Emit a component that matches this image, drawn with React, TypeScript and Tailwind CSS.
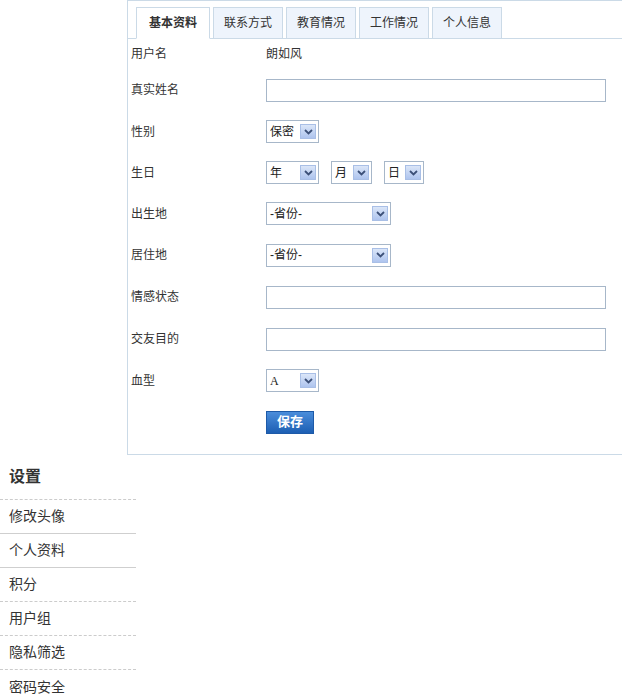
import React from 'react';

const FONT = '[font-family:"Liberation_Sans","Noto_Sans_CJK_SC",sans-serif]';

const TABS = ['基本资料', '联系方式', '教育情况', '工作情况', '个人信息'];

const MENU = [
  { label: '修改头像', line: 'solid' },
  { label: '个人资料', line: 'solid' },
  { label: '积分', line: 'dashed' },
  { label: '用户组', line: 'dashed' },
  { label: '隐私筛选', line: 'dashed' },
  { label: '密码安全', line: 'none' },
];

function Arrow() {
  return (
    <span className="flex h-[15px] w-[16px] items-center justify-center border border-[#a9bfe6] bg-gradient-to-b from-[#dbe6f8] to-[#aec4ee]">
      <svg width="9" height="6" viewBox="0 0 9 6">
        <path d="M1 1 L4.5 4.5 L8 1" fill="none" stroke="#3c5078" strokeWidth="1.8" />
      </svg>
    </span>
  );
}

function FakeSelect({ value, width, mono }: { value: string; width: string; mono?: boolean }) {
  return (
    <div className={`flex h-[23px] ${width} items-center justify-between border border-[#a7b7c9] bg-white pl-[3px] pr-[2px]`}>
      <span className={`text-[12px] leading-none text-[#222] ${mono ? '[font-family:"Liberation_Serif",serif]' : ''}`}>{value}</span>
      <Arrow />
    </div>
  );
}

function TextInput() {
  return <div className="h-[23px] w-[340px] border border-[#a7b7c9] bg-white" />;
}

function Row({ label, h, children }: { label: string; h: string; children?: React.ReactNode }) {
  return (
    <div className={`flex ${h} items-center`}>
      <div className="w-[135px] text-[12px] text-[#333]">{label}</div>
      <div className="flex items-center">{children}</div>
    </div>
  );
}

export default function App() {
  return (
    <div className={`w-[622px] bg-white ${FONT}`}>
      {/* Profile panel */}
      <div className="ml-[127px] w-[495px] border-b border-l border-t border-[#cbdae7]">
        {/* Tabs */}
        <div className="flex h-[38px] items-end gap-[3px] border-b border-[#cbdae7] pl-[8px]">
          {TABS.map((tab, i) => (
            <div
              key={tab}
              className={`-mb-px flex h-[32px] items-center justify-center border border-[#cbdae7] text-[12px] text-[#333] ${
                i === 0 ? 'w-[74px] border-b-white bg-white font-bold' : 'w-[70px] border-b-[#cbdae7] bg-[#eef4fc]'
              }`}
            >
              {tab}
            </div>
          ))}
        </div>

        {/* Form */}
        <div className="pb-[11px] pl-[3px]">
          <Row label="用户名" h="h-[30px]">
            <span className="text-[12px] text-[#333]">朗如风</span>
          </Row>
          <Row label="真实姓名" h="h-[42px]">
            <TextInput />
          </Row>
          <Row label="性别" h="h-[41px]">
            <FakeSelect value="保密" width="w-[53px]" />
          </Row>
          <Row label="生日" h="h-[41px]">
            <div className="flex gap-[12px]">
              <FakeSelect value="年" width="w-[53px]" />
              <FakeSelect value="月" width="w-[41px]" />
              <FakeSelect value="日" width="w-[40px]" />
            </div>
          </Row>
          <Row label="出生地" h="h-[41px]">
            <FakeSelect value="-省份-" width="w-[125px]" />
          </Row>
          <Row label="居住地" h="h-[42px]">
            <FakeSelect value="-省份-" width="w-[125px]" />
          </Row>
          <Row label="情感状态" h="h-[42px]">
            <TextInput />
          </Row>
          <Row label="交友目的" h="h-[42px]">
            <TextInput />
          </Row>
          <Row label="血型" h="h-[41px]">
            <FakeSelect value="A" width="w-[53px]" mono />
          </Row>
          <Row label="" h="h-[42px]">
            <button className="flex h-[23px] w-[48px] items-center justify-center border border-[#1d5aa8] bg-gradient-to-b from-[#4a8ddb] to-[#1c5fb3] text-[13px] font-bold text-white">
              保存
            </button>
          </Row>
        </div>
      </div>

      {/* Settings sidebar */}
      <div className="w-[136px]">
        <div className="flex h-[45px] items-center border-b border-dashed border-[#cccccc] pl-[9px] text-[16px] font-bold text-[#333]">
          设置
        </div>
        {MENU.map((item) => (
          <div
            key={item.label}
            className={`flex h-[34px] items-center pl-[9px] text-[14px] text-[#333] ${
              item.line === 'solid'
                ? 'border-b border-[#cfcfcf]'
                : item.line === 'dashed'
                ? 'border-b border-dashed border-[#cccccc]'
                : ''
            }`}
          >
            {item.label}
          </div>
        ))}
      </div>
    </div>
  );
}
